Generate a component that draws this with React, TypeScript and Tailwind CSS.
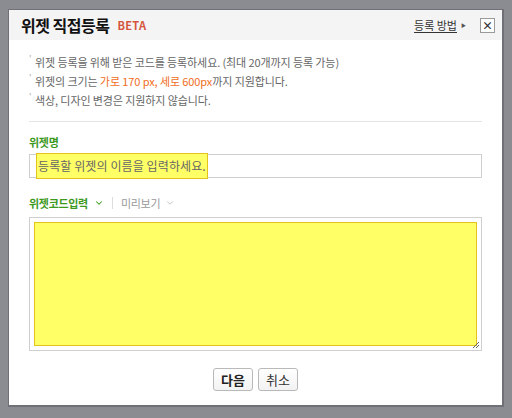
import { ChevronDown } from "lucide-react";

const font = { fontFamily: '"Noto Sans CJK KR", "Noto Sans", sans-serif' };

function Bullet({ children }: { children: React.ReactNode }) {
  return (
    <li className="flex items-start h-[19px] leading-[19px]">
      <span className="w-[6px] text-[9px] leading-[12px] text-[#aaa]">'</span>
      <span>{children}</span>
    </li>
  );
}

export default function App() {
  return (
    <div
      className="w-[512px] h-[418px] bg-[#8b8c91] pt-[9px] pl-[8px] overflow-hidden"
      style={font}
    >
      <div className="w-[496px] h-[398px] bg-white border border-[#707176] border-r-2 border-b-2 flex flex-col">
        {/* Header */}
        <div className="h-[30px] bg-[#f4f4f4] flex items-center pl-[12px] pr-[7px]">
          <h1 className="text-[16px] font-bold text-[#111] tracking-[-0.5px]">
            위젯 직접등록
          </h1>
          <span className="ml-[8px] text-[11px] font-bold text-[#d5553f] tracking-[0.3px]">
            BETA
          </span>
          <div className="ml-auto flex items-center">
            <span className="text-[11px] text-[#333] underline underline-offset-2">
              등록 방법
            </span>
            <span className="ml-[4px] text-[5px] text-[#555]">▶</span>
            <button className="ml-[14px] w-[15px] h-[15px] border border-[#9a9a9a] bg-white flex items-center justify-center text-[11px] leading-none font-bold text-[#333]">
              ×
            </button>
          </div>
        </div>

        {/* Body */}
        <div className="px-[20px] pt-[13px] flex flex-col">
          <ul className="text-[11px] text-[#666] tracking-[-0.1px] pb-[11px] border-b border-[#e4e4e4]">
            <Bullet>위젯 등록을 위해 받은 코드를 등록하세요. (최대 20개까지 등록 가능)</Bullet>
            <Bullet>
              위젯의 크기는 <span className="text-[#f06d1a]">가로 170 px, 세로 600px</span>까지
              지원합니다.
            </Bullet>
            <Bullet>색상, 디자인 변경은 지원하지 않습니다.</Bullet>
          </ul>

          <label className="mt-[12px] text-[11px] font-bold text-[#3d9a1f] leading-[16px] tracking-[-0.3px]">
            위젯명
          </label>
          <div className="mt-[4px] h-[24px] border border-[#cfcfcf] flex items-center pl-[6px]">
            <span className="h-[26px] bg-[#ffff66] border border-[#e3c31c] flex items-center px-[1px] text-[12px] text-[#666] tracking-[0.1px]">
              등록할 위젯의 이름을 입력하세요.
            </span>
          </div>

          <div className="mt-[17px] flex items-center h-[16px] text-[11px] tracking-[-0.3px]">
            <span className="font-bold text-[#3d9a1f]">위젯코드입력</span>
            <ChevronDown className="ml-[6px] w-[10px] h-[10px] text-[#3d9a1f]" strokeWidth={2.5} />
            <span className="mx-[8px] w-px h-[12px] bg-[#ddd]" />
            <span className="text-[#999]">미리보기</span>
            <ChevronDown className="ml-[5px] w-[10px] h-[10px] text-[#bbb]" strokeWidth={2} />
          </div>

          <div className="relative mt-[6px] h-[134px] border border-[#cfcfcf] p-[4px]">
            <div className="w-full h-full bg-[#ffff66] border border-[#e3c31c]" />
            <svg className="absolute right-[1px] bottom-[1px]" width="8" height="8" viewBox="0 0 8 8">
              <path d="M7 1 L1 7 M7 4 L4 7" stroke="#666" strokeWidth="1" />
            </svg>
          </div>

          <div className="mt-[17px] flex justify-center gap-[5px]">
            <button className="w-[40px] h-[23px] border border-[#b9b9b9] rounded-[3px] bg-gradient-to-b from-white to-[#f2f2f2] text-[13px] font-bold text-[#222]">
              다음
            </button>
            <button className="w-[40px] h-[23px] border border-[#b9b9b9] rounded-[3px] bg-gradient-to-b from-white to-[#f2f2f2] text-[13px] text-[#333]">
              취소
            </button>
          </div>
        </div>
      </div>
    </div>
  );
}
